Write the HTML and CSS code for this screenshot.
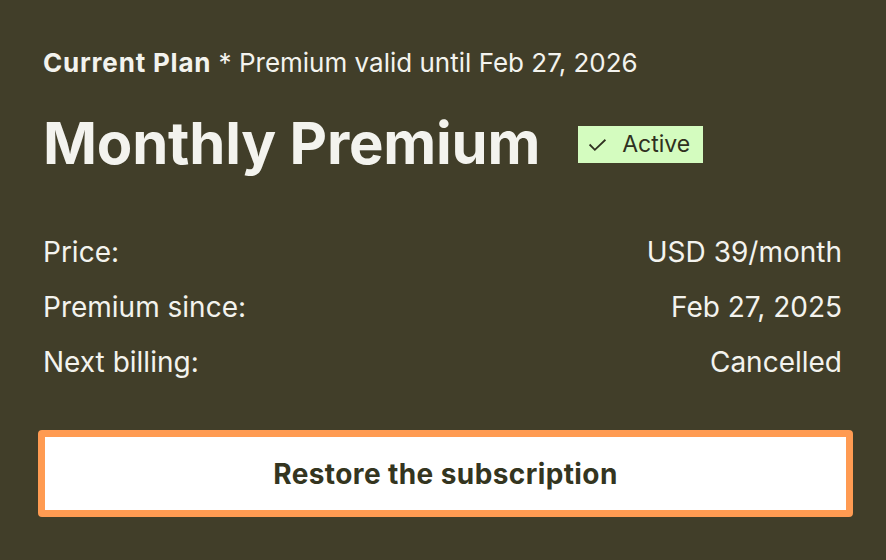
FILE: index.html
```html
<!DOCTYPE html>
<html>
<head>
<meta charset="utf-8">
<link rel="stylesheet" href="styles.css">
</head>
<body>
<main class="card">
  <p class="subtitle"><strong>Current Plan</strong> * Premium valid until Feb 27, 2026</p>
  <div class="title-row">
    <h1 class="title">Monthly Premium</h1>
    <span class="badge">
      <svg class="check" viewBox="0 0 18 16" width="19" height="17"><path d="M1.5 8 L6.5 13 L16.5 3.5" fill="none" stroke="#2f3020" stroke-width="1.7"/></svg>
      Active
    </span>
  </div>
  <dl class="details">
    <div class="row"><dt>Price:</dt><dd>USD 39/month</dd></div>
    <div class="row"><dt>Premium since:</dt><dd>Feb 27, 2025</dd></div>
    <div class="row"><dt>Next billing:</dt><dd>Cancelled</dd></div>
  </dl>
  <button class="restore">Restore the subscription</button>
</main>
</body>
</html>
```
FILE: styles.css
```css
html, body {
  margin: 0;
  padding: 0;
  background: #413e29;
}
body {
  font-family: Inter, "Noto Sans", sans-serif;
  color: #f3f3ee;
  width: 886px;
  height: 560px;
  overflow: hidden;
}
.card {
  padding: 46px 44px 0 43px;
}
.subtitle {
  margin: 0;
  font-size: 26px;
  line-height: 34px;
  font-weight: 400;
}
.subtitle strong {
  font-weight: 700;
  letter-spacing: 0.8px;
}
.title-row {
  display: flex;
  align-items: center;
  gap: 38px;
  margin-top: 28px;
}
.title {
  margin: 0;
  font-size: 58px;
  font-weight: 700;
  line-height: 70px;
  letter-spacing: -0.2px;
}
.badge {
  display: inline-flex;
  align-items: center;
  gap: 15px;
  background: #d4fcbf;
  color: #2f3020;
  font-size: 23px;
  height: 37px;
  padding: 0 13px 0 10px;
  box-sizing: border-box;
  margin-top: 2px;
}
.details {
  margin: 57px 0 0;
  display: flex;
  flex-direction: column;
  gap: 21px;
}
.row {
  display: flex;
  justify-content: space-between;
  font-size: 28px;
  line-height: 34px;
}
.row dt, .row dd {
  margin: 0;
}
.restore {
  display: block;
  margin: 51px 0 0 -5px;
  width: 815px;
  height: 87px;
  background: #ffffff;
  border: 7px solid #ff9b52;
  border-radius: 4px;
  font-family: Inter, "Noto Sans", sans-serif;
  font-weight: 700;
  font-size: 28px;
  letter-spacing: 0.4px;
  color: #343520;
  cursor: pointer;
}
```
